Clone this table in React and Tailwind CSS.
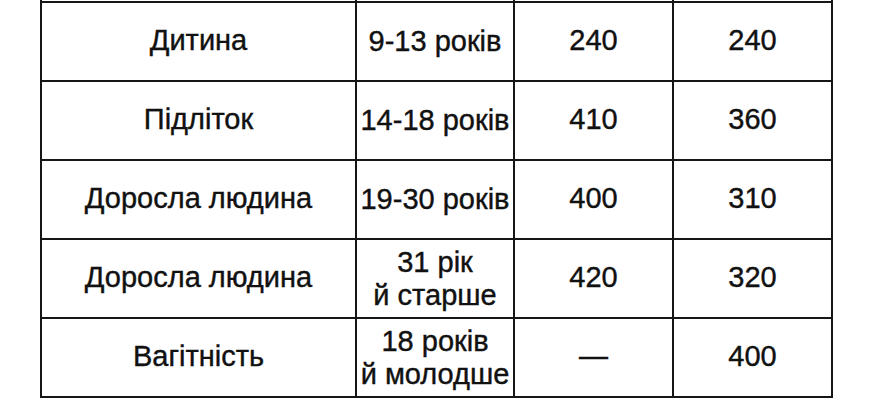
const rows = [
  { name: "Дитина", age: ["9-13 років"], a: "240", b: "240" },
  { name: "Підліток", age: ["14-18 років"], a: "410", b: "360" },
  { name: "Доросла людина", age: ["19-30 років"], a: "400", b: "310" },
  { name: "Доросла людина", age: ["31 рік", "й старше"], a: "420", b: "320" },
  { name: "Вагітність", age: ["18 років", "й молодше"], a: "—", b: "400" },
];

const cell =
  "flex flex-col items-center justify-center border-r-2 border-b-2 border-[#161616] text-center";

export default function App() {
  return (
    <main className="h-[400px] w-[870px] overflow-hidden bg-white pl-[40px] font-['Liberation_Sans',Arial,sans-serif] text-[29px] text-[#111] [-webkit-text-stroke:0.4px_#111]">
      <div className="grid w-[791px] grid-cols-[315px_158px_159px_159px] border-l-2 border-[#161616]">
        {/* tail of the row above */}
        <div className={cell + " h-[3px]"} />
        <div className={cell + " h-[3px]"} />
        <div className={cell + " h-[3px]"} />
        <div className={cell + " h-[3px]"} />

        {rows.map((r, i) => (
          <div key={i} className="contents">
            <div className={cell + " h-[79px] pb-[2px]"}>{r.name}</div>
            <div className={cell + " h-[79px] leading-[33px] whitespace-nowrap"}>
              {r.age.map((l) => (
                <span key={l}>{l}</span>
              ))}
            </div>
            <div className={cell + " h-[79px] pb-[2px]"}>{r.a}</div>
            <div className={cell + " h-[79px] pb-[2px]"}>{r.b}</div>
          </div>
        ))}
      </div>
    </main>
  );
}
